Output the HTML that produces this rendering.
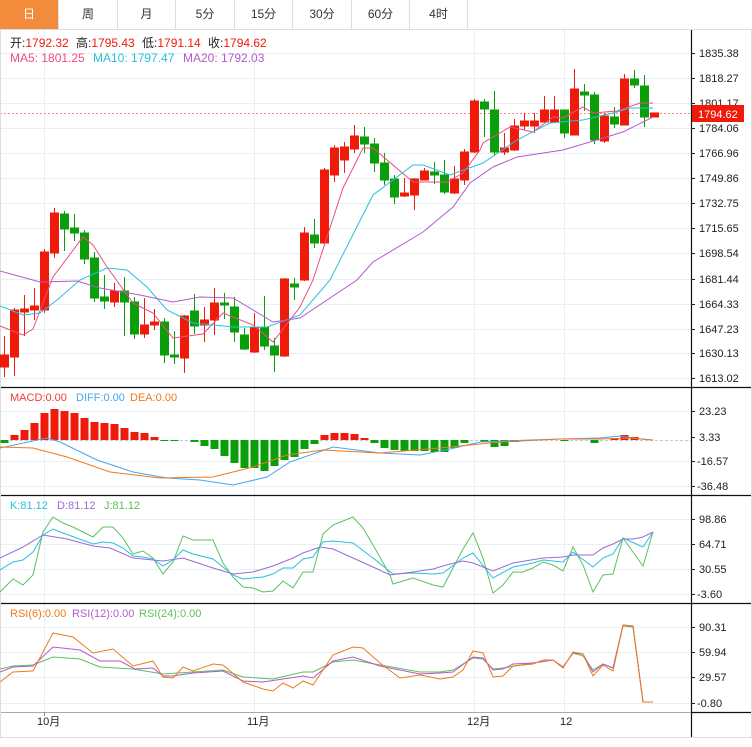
<!DOCTYPE html>
<html><head><meta charset="utf-8"><style>
body{margin:0;width:752px;height:747px;overflow:hidden;background:#fff;font-family:"Liberation Sans","Noto Sans CJK SC",sans-serif;}
.tabs{position:absolute;left:0;top:0;height:29px;width:752px;border-bottom:1px solid #ddd;}
.tab{position:absolute;top:0;height:29px;line-height:29px;text-align:center;font-size:12px;color:#333;border-right:1px solid #ddd;box-sizing:border-box;}
svg{position:absolute;left:0;top:0}
</style></head><body>
<div class="tabs">
<div class="tab" style="left:0;width:59px;background:#f28c3c;color:#fff">日</div>
<div class="tab" style="left:59px;width:59px">周</div>
<div class="tab" style="left:118px;width:58px">月</div>
<div class="tab" style="left:176px;width:59px">5分</div>
<div class="tab" style="left:235px;width:58px">15分</div>
<div class="tab" style="left:293px;width:59px">30分</div>
<div class="tab" style="left:352px;width:58px">60分</div>
<div class="tab" style="left:410px;width:58px">4时</div>
</div>
<svg width="752" height="747" style="top:0" font-family="Liberation Sans, Noto Sans CJK SC, sans-serif">
<!-- grid -->
<g stroke="#e8f0f5" stroke-width="1">
<line x1="44.5" y1="30" x2="44.5" y2="712"/><line x1="254.5" y1="30" x2="254.5" y2="712"/>
<line x1="474.5" y1="30" x2="474.5" y2="712"/><line x1="564.5" y1="30" x2="564.5" y2="712"/>
<line x1="0" y1="53.5" x2="691" y2="53.5"/><line x1="0" y1="78.5" x2="691" y2="78.5"/><line x1="0" y1="103.5" x2="691" y2="103.5"/><line x1="0" y1="128.5" x2="691" y2="128.5"/><line x1="0" y1="153.5" x2="691" y2="153.5"/><line x1="0" y1="178.5" x2="691" y2="178.5"/><line x1="0" y1="203.5" x2="691" y2="203.5"/><line x1="0" y1="228.5" x2="691" y2="228.5"/><line x1="0" y1="253.5" x2="691" y2="253.5"/><line x1="0" y1="279.5" x2="691" y2="279.5"/><line x1="0" y1="304.5" x2="691" y2="304.5"/><line x1="0" y1="329.5" x2="691" y2="329.5"/><line x1="0" y1="353.5" x2="691" y2="353.5"/><line x1="0" y1="378.5" x2="691" y2="378.5"/>
<line x1="0" y1="411.5" x2="691" y2="411.5"/><line x1="0" y1="461.5" x2="691" y2="461.5"/><line x1="0" y1="486.5" x2="691" y2="486.5"/>
<line x1="0" y1="519.5" x2="691" y2="519.5"/><line x1="0" y1="544.5" x2="691" y2="544.5"/><line x1="0" y1="569.5" x2="691" y2="569.5"/><line x1="0" y1="594.5" x2="691" y2="594.5"/>
<line x1="0" y1="627.5" x2="691" y2="627.5"/><line x1="0" y1="652.5" x2="691" y2="652.5"/><line x1="0" y1="677.5" x2="691" y2="677.5"/><line x1="0" y1="703.5" x2="691" y2="703.5"/>
</g>
<line x1="0" y1="440.5" x2="691" y2="440.5" stroke="#bcd" stroke-dasharray="3,2"/>
<line x1="0" y1="113.5" x2="691" y2="113.5" stroke="#f88" stroke-dasharray="2,2"/>
<!-- frame -->
<g stroke="#111" stroke-width="1.2">
<line x1="0" y1="387.5" x2="752" y2="387.5"/><line x1="0" y1="495.5" x2="752" y2="495.5"/><line x1="0" y1="603.5" x2="752" y2="603.5"/>
<line x1="691.5" y1="30" x2="691.5" y2="737"/><line x1="691" y1="712.5" x2="752" y2="712.5"/>
</g>
<line x1="0" y1="712.5" x2="691" y2="712.5" stroke="#aaa"/>
<line x1="0" y1="737.5" x2="752" y2="737.5" stroke="#ddd"/>
<line x1="0.5" y1="30" x2="0.5" y2="737" stroke="#ddd"/>
<line x1="751.5" y1="30" x2="751.5" y2="737" stroke="#ddd"/>
<!-- headers -->
<g font-size="12">
<text y="47" fill="#222"><tspan x="10">开:</tspan><tspan fill="#f01a0a">1792.32</tspan><tspan x="76">高:</tspan><tspan fill="#f01a0a">1795.43</tspan><tspan x="142">低:</tspan><tspan fill="#f01a0a">1791.14</tspan><tspan x="208">收:</tspan><tspan fill="#f01a0a">1794.62</tspan></text>
<text y="62"><tspan fill="#ee4d7e" x="10">MA5: 1801.25</tspan><tspan fill="#27c0dc" x="93">MA10: 1797.47</tspan><tspan fill="#b45acb" x="183">MA20: 1792.03</tspan></text>
</g>
<g font-size="11">
<text x="10" y="401"><tspan fill="#f03a3a">MACD:0.00</tspan><tspan fill="#4aa6ee" x="76">DIFF:0.00</tspan><tspan fill="#f07a1a" x="130">DEA:0.00</tspan></text>
<text x="10" y="509"><tspan fill="#27c0dc">K:81.12</tspan><tspan fill="#9b6bd6" x="57">D:81.12</tspan><tspan fill="#5cc05c" x="104">J:81.12</tspan></text>
<text x="10" y="617"><tspan fill="#f07a1a">RSI(6):0.00</tspan><tspan fill="#b45acb" x="72">RSI(12):0.00</tspan><tspan fill="#5cc05c" x="139">RSI(24):0.00</tspan></text>
</g>
<!-- right axis -->
<g font-size="11" fill="#222">
<g stroke="#222"><line x1="691" y1="53.5" x2="695" y2="53.5"/><line x1="691" y1="78.5" x2="695" y2="78.5"/><line x1="691" y1="103.5" x2="695" y2="103.5"/><line x1="691" y1="128.5" x2="695" y2="128.5"/><line x1="691" y1="153.5" x2="695" y2="153.5"/><line x1="691" y1="178.5" x2="695" y2="178.5"/><line x1="691" y1="203.5" x2="695" y2="203.5"/><line x1="691" y1="228.5" x2="695" y2="228.5"/><line x1="691" y1="253.5" x2="695" y2="253.5"/><line x1="691" y1="279.5" x2="695" y2="279.5"/><line x1="691" y1="304.5" x2="695" y2="304.5"/><line x1="691" y1="329.5" x2="695" y2="329.5"/><line x1="691" y1="353.5" x2="695" y2="353.5"/><line x1="691" y1="378.5" x2="695" y2="378.5"/>
<line x1="691" y1="411.5" x2="695" y2="411.5"/><line x1="691" y1="437.5" x2="695" y2="437.5"/><line x1="691" y1="461.5" x2="695" y2="461.5"/><line x1="691" y1="486.5" x2="695" y2="486.5"/>
<line x1="691" y1="519.5" x2="695" y2="519.5"/><line x1="691" y1="544.5" x2="695" y2="544.5"/><line x1="691" y1="569.5" x2="695" y2="569.5"/><line x1="691" y1="594.5" x2="695" y2="594.5"/>
<line x1="691" y1="627.5" x2="695" y2="627.5"/><line x1="691" y1="652.5" x2="695" y2="652.5"/><line x1="691" y1="677.5" x2="695" y2="677.5"/><line x1="691" y1="703.5" x2="695" y2="703.5"/></g>
<text x="699" y="57">1835.38</text><text x="699" y="82">1818.27</text><text x="699" y="107">1801.17</text><text x="699" y="132">1784.06</text><text x="699" y="157">1766.96</text><text x="699" y="182">1749.86</text><text x="699" y="207">1732.75</text><text x="699" y="232">1715.65</text><text x="699" y="257">1698.54</text><text x="699" y="283">1681.44</text><text x="699" y="308">1664.33</text><text x="699" y="333">1647.23</text><text x="699" y="357">1630.13</text><text x="699" y="382">1613.02</text>
<text x="699" y="415">23.23</text><text x="699" y="441">3.33</text><text x="697" y="465">-16.57</text><text x="697" y="490">-36.48</text>
<text x="699" y="523">98.86</text><text x="699" y="548">64.71</text><text x="699" y="573">30.55</text><text x="697" y="598">-3.60</text>
<text x="699" y="631">90.31</text><text x="699" y="656">59.94</text><text x="699" y="681">29.57</text><text x="697" y="707">-0.80</text>
</g>
<rect x="692" y="105" width="52" height="17" fill="#f01a0a"/>
<text x="698" y="118" font-size="11" fill="#fff">1794.62</text>
<!-- dates -->
<g font-size="11" fill="#222"><line x1="44.5" y1="712" x2="44.5" y2="716" stroke="#888"/><text x="37" y="725">10月</text><text x="247" y="725">11月</text><text x="467" y="725">12月</text><text x="560" y="725">12</text></g>
<!-- candles -->
<g stroke-width="1">
<g stroke="#f01a0a" fill="#f01a0a">
<line x1="4.5" y1="336" x2="4.5" y2="377"/><rect x="0.5" y="355" width="8" height="12"/>
<line x1="14.5" y1="308" x2="14.5" y2="376"/><rect x="10.5" y="310" width="8" height="47"/>
<line x1="24.5" y1="295" x2="24.5" y2="336"/><rect x="20.5" y="309" width="8" height="3"/>
<line x1="34.5" y1="288" x2="34.5" y2="320"/><rect x="30.5" y="306" width="8" height="4"/>
<line x1="44.5" y1="249" x2="44.5" y2="313"/><rect x="40.5" y="252" width="8" height="58"/>
<line x1="54.5" y1="208" x2="54.5" y2="258"/><rect x="50.5" y="213" width="8" height="40"/>
<line x1="114.5" y1="283" x2="114.5" y2="307"/><rect x="110.5" y="291" width="8" height="11"/>
<line x1="144.5" y1="298" x2="144.5" y2="338"/><rect x="140.5" y="325" width="8" height="9"/>
<line x1="154.5" y1="309" x2="154.5" y2="330"/><rect x="150.5" y="322" width="8" height="3"/>
<line x1="184.5" y1="315" x2="184.5" y2="373"/><rect x="180.5" y="316" width="8" height="42"/>
<line x1="204.5" y1="307" x2="204.5" y2="342"/><rect x="200.5" y="320" width="8" height="5"/>
<line x1="214.5" y1="288" x2="214.5" y2="335"/><rect x="210.5" y="303" width="8" height="17"/>
<line x1="254.5" y1="313" x2="254.5" y2="353"/><rect x="250.5" y="327" width="8" height="25"/>
<line x1="284.5" y1="278" x2="284.5" y2="357"/><rect x="280.5" y="279" width="8" height="77"/>
<line x1="304.5" y1="227" x2="304.5" y2="281"/><rect x="300.5" y="233" width="8" height="47"/>
<line x1="324.5" y1="168" x2="324.5" y2="244"/><rect x="320.5" y="170" width="8" height="73"/>
<line x1="334.5" y1="145" x2="334.5" y2="182"/><rect x="330.5" y="148" width="8" height="27"/>
<line x1="344.5" y1="142" x2="344.5" y2="173"/><rect x="340.5" y="147" width="8" height="13"/>
<line x1="354.5" y1="125" x2="354.5" y2="153"/><rect x="350.5" y="136" width="8" height="13"/>
<line x1="404.5" y1="178" x2="404.5" y2="197"/><rect x="400.5" y="193" width="8" height="3"/>
<line x1="414.5" y1="178" x2="414.5" y2="210"/><rect x="410.5" y="179" width="8" height="16"/>
<line x1="424.5" y1="168" x2="424.5" y2="180"/><rect x="420.5" y="171" width="8" height="9"/>
<line x1="454.5" y1="166" x2="454.5" y2="194"/><rect x="450.5" y="179" width="8" height="14"/>
<line x1="464.5" y1="149" x2="464.5" y2="185"/><rect x="460.5" y="152" width="8" height="28"/>
<line x1="474.5" y1="99" x2="474.5" y2="153"/><rect x="470.5" y="101" width="8" height="51"/>
<line x1="504.5" y1="133" x2="504.5" y2="155"/><rect x="500.5" y="148" width="8" height="4"/>
<line x1="514.5" y1="119" x2="514.5" y2="151"/><rect x="510.5" y="126" width="8" height="24"/>
<line x1="524.5" y1="113" x2="524.5" y2="130"/><rect x="520.5" y="121" width="8" height="5"/>
<line x1="534.5" y1="113" x2="534.5" y2="133"/><rect x="530.5" y="121" width="8" height="5"/>
<line x1="544.5" y1="96" x2="544.5" y2="122"/><rect x="540.5" y="110" width="8" height="12"/>
<line x1="554.5" y1="96" x2="554.5" y2="122"/><rect x="550.5" y="110" width="8" height="12"/>
<line x1="574.5" y1="69" x2="574.5" y2="135"/><rect x="570.5" y="89" width="8" height="46"/>
<line x1="604.5" y1="113" x2="604.5" y2="143"/><rect x="600.5" y="116" width="8" height="25"/>
<line x1="624.5" y1="74" x2="624.5" y2="125"/><rect x="620.5" y="79" width="8" height="46"/>
<rect x="650.5" y="113" width="8" height="4"/>
</g>
<g stroke="#0a9e0a" fill="#0a9e0a">
<line x1="64.5" y1="211" x2="64.5" y2="251"/><rect x="60.5" y="214" width="8" height="15"/>
<line x1="74.5" y1="214" x2="74.5" y2="241"/><rect x="70.5" y="228" width="8" height="5"/>
<line x1="84.5" y1="230" x2="84.5" y2="264"/><rect x="80.5" y="233" width="8" height="26"/>
<line x1="94.5" y1="252" x2="94.5" y2="302"/><rect x="90.5" y="258" width="8" height="40"/>
<line x1="104.5" y1="275" x2="104.5" y2="309"/><rect x="100.5" y="297" width="8" height="4"/>
<line x1="124.5" y1="277" x2="124.5" y2="336"/><rect x="120.5" y="291" width="8" height="11"/>
<line x1="134.5" y1="297" x2="134.5" y2="339"/><rect x="130.5" y="302" width="8" height="32"/>
<line x1="164.5" y1="318" x2="164.5" y2="363"/><rect x="160.5" y="322" width="8" height="33"/>
<line x1="174.5" y1="331" x2="174.5" y2="364"/><rect x="170.5" y="355" width="8" height="2"/>
<line x1="194.5" y1="294" x2="194.5" y2="334"/><rect x="190.5" y="311" width="8" height="15"/>
<line x1="224.5" y1="293" x2="224.5" y2="319"/><rect x="220.5" y="303" width="8" height="2"/>
<line x1="234.5" y1="297" x2="234.5" y2="342"/><rect x="230.5" y="307" width="8" height="25"/>
<line x1="244.5" y1="328" x2="244.5" y2="350"/><rect x="240.5" y="335" width="8" height="14"/>
<line x1="264.5" y1="296" x2="264.5" y2="350"/><rect x="260.5" y="327" width="8" height="19"/>
<line x1="274.5" y1="338" x2="274.5" y2="372"/><rect x="270.5" y="346" width="8" height="9"/>
<line x1="294.5" y1="278" x2="294.5" y2="300"/><rect x="290.5" y="284" width="8" height="3"/>
<line x1="314.5" y1="219" x2="314.5" y2="248"/><rect x="310.5" y="235" width="8" height="8"/>
<line x1="364.5" y1="127" x2="364.5" y2="153"/><rect x="360.5" y="137" width="8" height="7"/>
<line x1="374.5" y1="138" x2="374.5" y2="172"/><rect x="370.5" y="144" width="8" height="19"/>
<line x1="384.5" y1="153" x2="384.5" y2="185"/><rect x="380.5" y="163" width="8" height="17"/>
<line x1="394.5" y1="175" x2="394.5" y2="204"/><rect x="390.5" y="179" width="8" height="18"/>
<line x1="434.5" y1="162" x2="434.5" y2="184"/><rect x="430.5" y="172" width="8" height="3"/>
<line x1="444.5" y1="160" x2="444.5" y2="194"/><rect x="440.5" y="175" width="8" height="17"/>
<line x1="484.5" y1="99" x2="484.5" y2="137"/><rect x="480.5" y="102" width="8" height="7"/>
<line x1="494.5" y1="91" x2="494.5" y2="155"/><rect x="490.5" y="110" width="8" height="42"/>
<line x1="564.5" y1="110" x2="564.5" y2="138"/><rect x="560.5" y="110" width="8" height="23"/>
<line x1="584.5" y1="84" x2="584.5" y2="111"/><rect x="580.5" y="92" width="8" height="3"/>
<line x1="594.5" y1="92" x2="594.5" y2="144"/><rect x="590.5" y="95" width="8" height="45"/>
<line x1="614.5" y1="107" x2="614.5" y2="128"/><rect x="610.5" y="117" width="8" height="7"/>
<line x1="634.5" y1="70" x2="634.5" y2="88"/><rect x="630.5" y="79" width="8" height="6"/>
<line x1="644.5" y1="75" x2="644.5" y2="127"/><rect x="640.5" y="86" width="8" height="31"/>
</g>
</g>
<!-- MAs -->
<g fill="none" stroke-width="1">
<polyline stroke="#ee4d7e" points="0,326 23,335 33,329 53,277 83,237 93,245 107,267 133,303 153,313 173,338 203,334 223,313 253,325 273,342 300,307 313,280 343,188 363,148 373,148 413,182 447,182 463,173 480,150 483,143 510,127 533,132 553,117 563,118 583,107 593,113 617,111 640,103 653,103"/>
<polyline stroke="#27c0dc" points="0,306 23,315 40,313 57,300 80,280 107,268 127,270 147,287 167,310 193,323 233,327 267,327 300,315 330,280 373,195 413,165 423,165 450,175 483,163 517,140 550,123 583,120 617,112 630,108 653,108"/>
<polyline stroke="#b45acb" points="0,271 40,282 77,281 100,288 140,295 173,302 200,297 233,298 273,322 300,318 357,280 373,262 423,232 453,207 470,183 493,167 517,157 563,150 590,142 623,132 653,117"/>
</g>
<!-- MACD bars -->
<g fill="#f01a0a">
<rect x="10.5" y="435" width="8" height="5"/><rect x="20.5" y="430" width="8" height="10"/><rect x="30.5" y="423" width="8" height="17"/><rect x="40.5" y="413" width="8" height="27"/><rect x="50.5" y="409" width="8" height="31"/><rect x="60.5" y="411" width="8" height="29"/><rect x="70.5" y="413" width="8" height="27"/><rect x="80.5" y="418" width="8" height="22"/><rect x="90.5" y="422" width="8" height="18"/><rect x="100.5" y="423" width="8" height="17"/><rect x="110.5" y="424" width="8" height="16"/><rect x="120.5" y="428" width="8" height="12"/><rect x="130.5" y="432" width="8" height="8"/><rect x="140.5" y="433" width="8" height="7"/><rect x="150.5" y="437" width="8" height="3"/>
<rect x="320.5" y="435" width="8" height="5"/><rect x="330.5" y="433" width="8" height="7"/><rect x="340.5" y="433" width="8" height="7"/><rect x="350.5" y="434" width="8" height="6"/><rect x="360.5" y="438" width="8" height="2"/>
<rect x="610.5" y="438" width="8" height="2"/><rect x="620.5" y="435" width="8" height="5"/><rect x="630.5" y="437" width="8" height="3"/>
</g>
<g fill="#0a9e0a">
<rect x="0.5" y="440" width="8" height="3"/><rect x="160.5" y="440" width="8" height="1"/><rect x="170.5" y="440" width="8" height="1"/><rect x="190.5" y="440" width="8" height="2"/><rect x="200.5" y="440" width="8" height="6"/><rect x="210.5" y="440" width="8" height="9"/><rect x="220.5" y="440" width="8" height="16"/><rect x="230.5" y="440" width="8" height="23"/><rect x="240.5" y="440" width="8" height="28"/><rect x="250.5" y="440" width="8" height="28"/><rect x="260.5" y="440" width="8" height="31"/><rect x="270.5" y="440" width="8" height="26"/><rect x="280.5" y="440" width="8" height="20"/><rect x="290.5" y="440" width="8" height="17"/><rect x="300.5" y="440" width="8" height="9"/><rect x="310.5" y="440" width="8" height="4"/>
<rect x="370.5" y="440" width="8" height="3"/><rect x="380.5" y="440" width="8" height="8"/><rect x="390.5" y="440" width="8" height="10"/><rect x="400.5" y="440" width="8" height="11"/><rect x="410.5" y="440" width="8" height="11"/><rect x="420.5" y="440" width="8" height="11"/><rect x="430.5" y="440" width="8" height="12"/><rect x="440.5" y="440" width="8" height="12"/><rect x="450.5" y="440" width="8" height="8"/><rect x="460.5" y="440" width="8" height="3"/><rect x="480.5" y="440" width="8" height="2"/><rect x="490.5" y="440" width="8" height="7"/><rect x="500.5" y="440" width="8" height="6"/><rect x="510.5" y="440" width="8" height="2"/><rect x="520.5" y="440" width="8" height="1"/><rect x="560.5" y="440" width="8" height="1"/><rect x="590.5" y="440" width="8" height="3"/>
</g>
<g fill="none" stroke-width="1">
<polyline stroke="#4aa6ee" points="0,448 47,438 60,442 97,460 133,472 167,478 200,480 233,485 267,477 290,462 333,447 380,453 420,455 450,449 480,442 530,440 560,439 600,438 620,436 640,439 653,440"/>
<polyline stroke="#f07a1a" points="0,447 33,448 67,457 110,472 160,478 213,477 253,467 287,455 323,450 380,453 440,448 500,442 560,439 600,439 630,438 653,440"/>
</g>
<!-- KDJ -->
<g fill="none" stroke-width="1">
<polyline stroke="#5cc05c" points="0,592 13,579 23,585 33,575 43,532 53,517 63,523 73,527 93,537 103,527 113,527 123,538 133,554 143,551 153,558 163,574 173,562 183,536 193,540 213,540 223,563 233,577 243,587 253,588 263,592 273,591 283,581 293,588 303,572 313,572 323,534 333,525 353,517 363,528 373,545 390,575 393,584 413,578 433,585 443,587 463,549 473,533 483,558 493,593 503,585 513,572 523,572 533,568 543,562 553,565 563,571 573,547 583,565 593,592 603,575 613,574 623,538 643,566 653,532"/>
<polyline stroke="#27c0dc" points="0,570 13,562 23,560 33,552 43,535 53,529 63,533 93,544 103,542 113,543 123,548 133,556 143,557 153,559 163,566 173,560 183,550 193,554 213,559 223,567 233,575 243,579 263,577 273,574 283,568 293,568 303,559 313,557 323,542 333,541 353,543 373,558 393,574 413,573 433,574 443,573 463,558 473,553 493,578 513,567 533,563 543,560 563,562 573,552 593,567 603,558 613,554 623,538 643,547 653,532"/>
<polyline stroke="#9b6bd6" points="0,558 23,547 43,535 67,539 93,546 110,548 133,558 163,561 183,558 213,568 233,574 253,572 273,566 293,558 303,553 320,547 333,549 353,558 373,567 390,575 413,572 433,569 450,564 463,561 473,563 493,571 513,563 543,558 563,557 573,555 593,555 603,548 613,544 623,539 633,539 643,537 653,532"/>
</g>
<!-- RSI -->
<g fill="none" stroke-width="1">
<polyline stroke="#5cc05c" points="0,669 13,666 33,665 53,657 80,659 100,667 133,669 163,674 193,672 223,670 243,677 273,679 303,672 313,672 333,662 353,660 380,665 420,672 440,672 453,670 473,658 483,659 493,669 503,668 533,663 553,660 563,667 573,653 583,656 593,670 603,664 613,668 623,626 633,627 643,702 653,702"/>
<polyline stroke="#b45acb" points="0,672 13,667 33,666 53,647 80,650 100,661 120,661 135,669 153,668 163,676 173,676 193,673 223,671 243,681 263,682 283,679 303,676 313,678 333,661 353,657 380,666 420,674 440,673 453,672 473,657 483,658 493,670 503,669 513,664 533,663 553,660 563,667 573,653 583,654 593,672 603,664 613,668 623,625 633,626 643,702 653,702"/>
<polyline stroke="#f07a1a" points="0,682 13,672 33,671 53,633 73,637 93,653 113,649 133,666 153,661 163,677 173,678 183,667 193,671 213,664 223,665 243,682 263,689 273,691 283,683 293,688 303,681 313,685 333,655 353,647 363,648 380,663 400,678 420,675 440,679 453,677 463,670 473,651 483,653 493,677 503,676 513,666 533,664 543,660 553,660 563,668 573,652 583,654 593,676 603,665 613,671 623,625 633,626 643,702 653,702"/>
</g>
</svg>
</body></html>
